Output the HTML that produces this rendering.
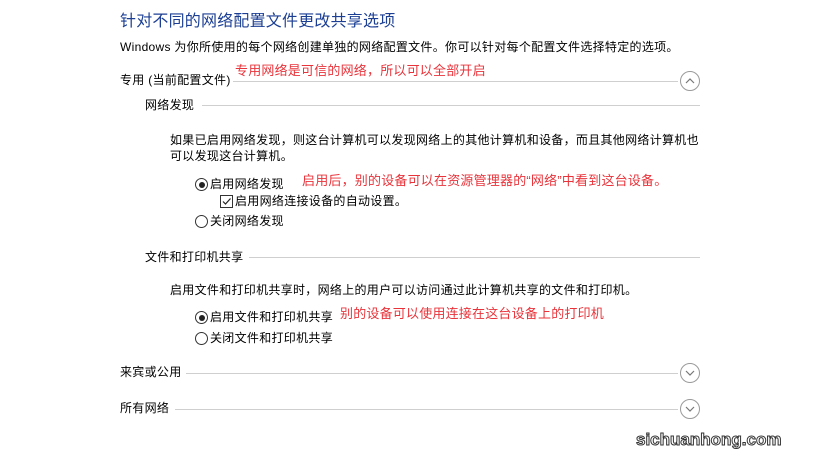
<!DOCTYPE html>
<html><head><meta charset="utf-8"><style>
body{margin:0;width:826px;height:461px;background:#fff;position:relative;overflow:hidden;font-family:"Liberation Sans","Noto Sans CJK SC",sans-serif;font-size:12px;color:#000}
.t{position:absolute;white-space:nowrap;line-height:16px;letter-spacing:0.3px}
.r{color:#e8333a;font-size:13px;letter-spacing:0.2px}
.ln{position:absolute;height:1px;background:#cfcfcf}
.c{position:absolute;width:18px;height:18px;border:1px solid #9a9a9a;border-radius:50%}
.c svg{position:absolute;left:4px;top:5px}
.rad{position:absolute;width:11px;height:11px;border:1px solid #333;border-radius:50%;background:#fff}
.rad.on::after{content:"";position:absolute;left:2.5px;top:2.5px;width:6px;height:6px;border-radius:50%;background:#222}
</style></head><body>
<div class="t" style="left:120px;top:12px;font-size:16px;line-height:20px;color:#1c3f94;letter-spacing:0.2px">针对不同的网络配置文件更改共享选项</div>
<div class="t" style="left:120px;top:39px">Windows 为你所使用的每个网络创建单独的网络配置文件。你可以针对每个配置文件选择特定的选项。</div>
<div class="t" style="left:120px;top:72px">专用 (当前配置文件)</div>
<div class="t r" style="left:235px;top:63px">专用网络是可信的网络，所以可以全部开启</div>
<div class="ln" style="left:233px;top:81px;width:445px"></div>
<div class="c" style="left:680px;top:71px"><svg width="10" height="8"><path d="M1 6 L5 2 L9 6" fill="none" stroke="#777" stroke-width="1.2"/></svg></div>
<div class="t" style="left:145px;top:97px">网络发现</div>
<div class="ln" style="left:202px;top:105px;width:498px"></div>
<div class="t" style="left:170px;top:132px">如果已启用网络发现，则这台计算机可以发现网络上的其他计算机和设备，而且其他网络计算机也</div>
<div class="t" style="left:170px;top:148px">可以发现这台计算机。</div>
<div class="rad on" style="left:195px;top:178px"></div>
<div class="t" style="left:210px;top:176px">启用网络发现</div>
<div class="t r" style="left:302px;top:173px">启用后，别的设备可以在资源管理器的“网络”中看到这台设备。</div>
<div style="position:absolute;left:220px;top:195px;width:11px;height:11px;border:1px solid #333"><svg width="11" height="11" style="position:absolute;left:0;top:0"><path d="M2 5.5 L4.5 8 L9.5 2.5" fill="none" stroke="#222" stroke-width="1.2"/></svg></div>
<div class="t" style="left:235px;top:193px">启用网络连接设备的自动设置。</div>
<div class="rad" style="left:195px;top:215px"></div>
<div class="t" style="left:210px;top:213px">关闭网络发现</div>
<div class="t" style="left:145px;top:249px">文件和打印机共享</div>
<div class="ln" style="left:249px;top:257px;width:451px"></div>
<div class="t" style="left:170px;top:282px">启用文件和打印机共享时，网络上的用户可以访问通过此计算机共享的文件和打印机。</div>
<div class="rad on" style="left:195px;top:311px"></div>
<div class="t" style="left:210px;top:309px">启用文件和打印机共享</div>
<div class="t r" style="left:340px;top:306px">别的设备可以使用连接在这台设备上的打印机</div>
<div class="rad" style="left:195px;top:332px"></div>
<div class="t" style="left:210px;top:330px">关闭文件和打印机共享</div>
<div class="t" style="left:120px;top:364px">来宾或公用</div>
<div class="ln" style="left:186px;top:373px;width:492px"></div>
<div class="c" style="left:680px;top:363px"><svg width="10" height="8"><path d="M1 2 L5 6 L9 2" fill="none" stroke="#777" stroke-width="1.2"/></svg></div>
<div class="t" style="left:120px;top:400px">所有网络</div>
<div class="ln" style="left:175px;top:409px;width:503px"></div>
<div class="c" style="left:680px;top:399px"><svg width="10" height="8"><path d="M1 2 L5 6 L9 2" fill="none" stroke="#777" stroke-width="1.2"/></svg></div>
<div class="t" style="left:636px;top:430px;font-size:17px;line-height:20px;font-weight:bold;color:#fff;-webkit-text-stroke:1px #333;letter-spacing:0">sichuanhong.com</div>
</body></html>
